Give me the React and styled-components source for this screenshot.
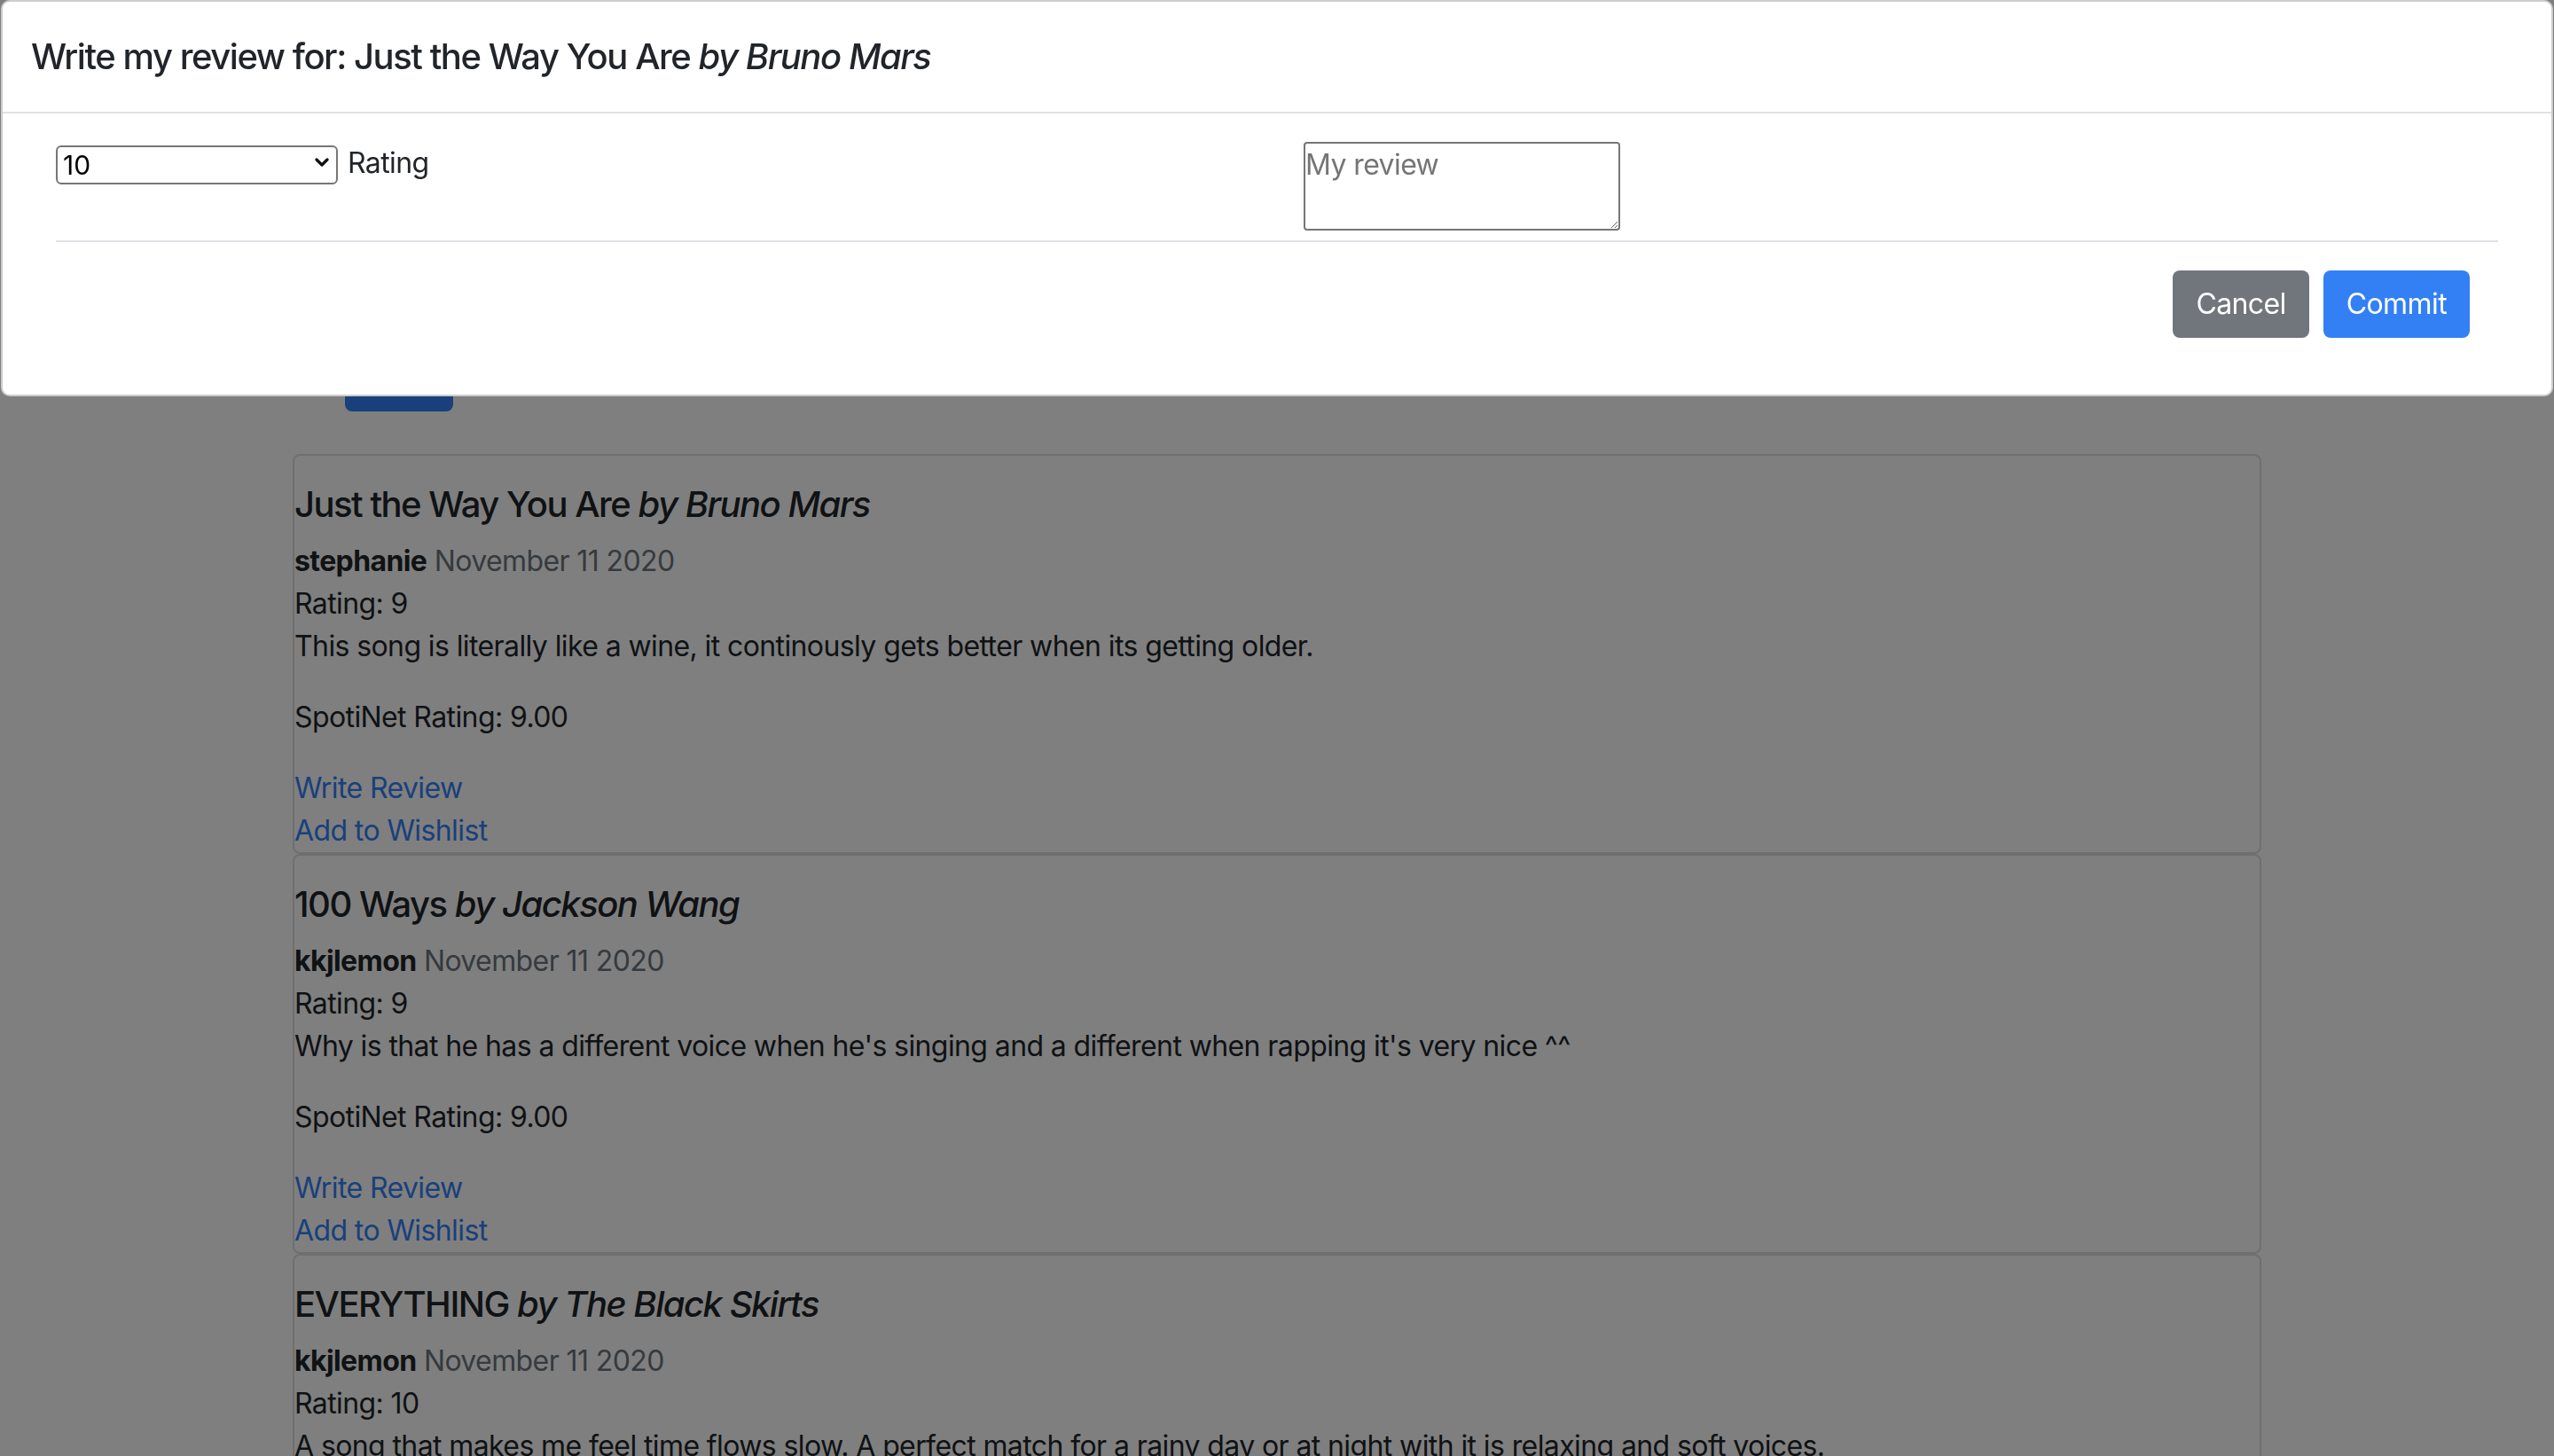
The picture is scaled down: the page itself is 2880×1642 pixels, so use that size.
import React from "react";
import styled, { createGlobalStyle } from "styled-components";

const GlobalStyle = createGlobalStyle`
  body {
    margin: 0;
    font-family: Inter, "Noto Sans", "Liberation Sans", sans-serif;
    font-size: 32px;
    line-height: 1.5;
    letter-spacing: -0.6px;
    color: #212529;
    background: #fff;
  }
`;

const Page = styled.div`
  max-width: 2280px;
  margin: 0 auto;
  padding: 0 30px;
  box-sizing: border-box;
`;

const TopBar = styled.div`
  display: flex;
  padding-top: 388px;
  padding-left: 59px;
  margin-bottom: 48px;
`;

const NavButton = styled.div`
  width: 122px;
  height: 76px;
  background: #3380f5;
  border-radius: 8px;
`;

const Card = styled.div`
  border: 2px solid rgba(0, 0, 0, 0.125);
  border-radius: 8px;
  padding-top: 31px;
`;

const SongTitle = styled.h5`
  margin: 0 0 16px;
  font-size: 40px;
  font-weight: 500;
  line-height: 1.2;
  letter-spacing: -1.5px;
  em {
    font-style: italic;
  }
`;

const Line = styled.div`
  margin: 0;
`;

const User = styled.b`
  font-weight: 700;
`;

const Muted = styled.span`
  color: #6c757d;
`;

const Para = styled.p`
  margin: 0 0 32px;
`;

const LinkLine = styled.a`
  display: block;
  color: #3380f5;
  text-decoration: none;
`;

const Backdrop = styled.div`
  position: fixed;
  inset: 0;
  background: rgba(0, 0, 0, 0.5);
`;

const Modal = styled.div`
  position: fixed;
  top: 0;
  left: 1px;
  right: 1px;
  background: #fff;
  border: 2px solid rgba(0, 0, 0, 0.2);
  border-radius: 10px;
  box-sizing: border-box;
`;

const ModalHeader = styled.div`
  padding: 32px;
  border-bottom: 2px solid #dee2e6;
`;

const ModalTitle = styled.h5`
  margin: 0;
  font-size: 40px;
  font-weight: 500;
  line-height: 1.5;
  letter-spacing: -1.45px;
`;

const ModalBody = styled.div`
  padding: 32px 30px;
`;

const Inner = styled.div`
  padding: 0 30px;
`;

const FormRow = styled.div`
  display: grid;
  grid-template-columns: 1fr 1fr;
  column-gap: 60px;
  padding-bottom: 11px;
`;

const Field = styled.div`
  display: flex;
  align-items: flex-start;
  gap: 11px;
`;

const SelectWrap = styled.div`
  position: relative;
  margin-top: 2px;
`;

const Select = styled.select`
  appearance: none;
  width: 318px;
  height: 44px;
  box-sizing: border-box;
  border: 2px solid #767676;
  border-radius: 6px;
  background: #fff;
  font-family: Inter, "Noto Sans", sans-serif;
  font-size: 30px;
  color: #000;
  padding: 0 0 0 6px;
  line-height: 40px;
`;

const Chevron = styled.svg`
  position: absolute;
  right: 10px;
  top: 15px;
  pointer-events: none;
`;

const Label = styled.label`
  line-height: 48px;
`;

const Textarea = styled.textarea`
  display: block;
  width: 357px;
  height: 100px;
  box-sizing: border-box;
  border: 2px solid #767676;
  border-radius: 4px;
  padding: 0;
  font-family: Inter, "Noto Sans", sans-serif;
  font-size: 32px;
  line-height: 48px;
  letter-spacing: -0.6px;
  &::placeholder {
    color: #757575;
  }
`;

const Footer = styled.div`
  display: flex;
  justify-content: flex-end;
  border-top: 2px solid #dee2e6;
  padding: 24px;
`;

const Btn = styled.button`
  margin: 8px;
  padding: 12px 24px;
  border: 2px solid transparent;
  border-radius: 8px;
  background: ${(p) => (p.primary ? "#3380f5" : "#71767d")};
  color: #fff;
  font-family: Inter, "Noto Sans", sans-serif;
  font-size: 32px;
  line-height: 48px;
  letter-spacing: -0.6px;
`;

const reviews = [
  {
    song: "Just the Way You Are",
    artist: "Bruno Mars",
    user: "stephanie",
    rating: 9,
    text: "This song is literally like a wine, it continously gets better when its getting older.",
    avg: "9.00",
  },
  {
    song: "100 Ways",
    artist: "Jackson Wang",
    user: "kkjlemon",
    rating: 9,
    text: "Why is that he has a different voice when he's singing and a different when rapping it's very nice ^^",
    avg: "9.00",
  },
  {
    song: "EVERYTHING",
    artist: "The Black Skirts",
    user: "kkjlemon",
    rating: 10,
    text: "A song that makes me feel time flows slow. A perfect match for a rainy day or at night with it is relaxing and soft voices.",
    avg: "10.00",
  },
];

const ReviewCard = ({ r }) => (
  <Card>
    <SongTitle>
      {r.song} <em>by {r.artist}</em>
    </SongTitle>
    <Line>
      <User>{r.user}</User> <Muted>November 11 2020</Muted>
    </Line>
    <Line>Rating: {r.rating}</Line>
    <Para>{r.text}</Para>
    <Para>SpotiNet Rating: {r.avg}</Para>
    <LinkLine href="#">Write Review</LinkLine>
    <LinkLine href="#">Add to Wishlist</LinkLine>
  </Card>
);

export default function App() {
  return (
    <>
      <GlobalStyle />
      <Page>
        <TopBar>
          <NavButton />
        </TopBar>
        {reviews.map((r, i) => (
          <ReviewCard key={i} r={r} />
        ))}
      </Page>
      <Backdrop />
      <Modal>
        <ModalHeader>
          <ModalTitle>
            Write my review for: Just the Way You Are <em>by Bruno Mars</em>
          </ModalTitle>
        </ModalHeader>
        <ModalBody>
          <Inner>
            <FormRow>
              <Field>
                <SelectWrap>
                  <Select defaultValue="10">
                    {[1, 2, 3, 4, 5, 6, 7, 8, 9, 10].map((n) => (
                      <option key={n} value={n}>
                        {n}
                      </option>
                    ))}
                  </Select>
                  <Chevron width="16" height="12" viewBox="0 0 16 12">
                    <path d="M2 3l6 6 6-6" fill="none" stroke="#111" strokeWidth="3.2" strokeLinecap="round" strokeLinejoin="round" />
                  </Chevron>
                </SelectWrap>
                <Label>Rating</Label>
              </Field>
              <div>
                <Textarea placeholder="My review" />
              </div>
            </FormRow>
            <Footer>
              <Btn>Cancel</Btn>
              <Btn primary>Commit</Btn>
            </Footer>
          </Inner>
        </ModalBody>
      </Modal>
    </>
  );
}
